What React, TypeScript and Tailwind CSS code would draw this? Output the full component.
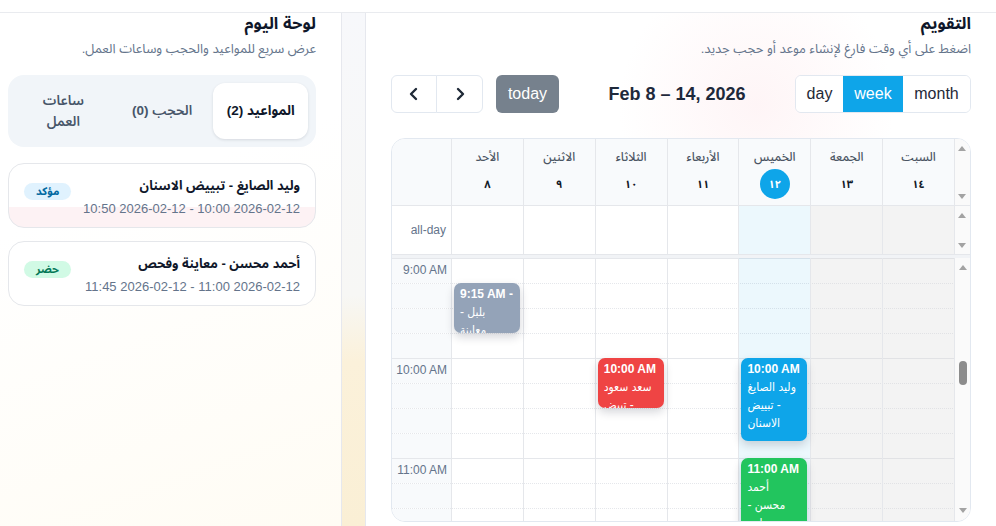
import React from "react";

type Day = { name: string; num: string; today?: boolean; off?: boolean };

const days: Day[] = [
  { name: "الأحد", num: "٨" },
  { name: "الاثنين", num: "٩" },
  { name: "الثلاثاء", num: "١٠" },
  { name: "الأربعاء", num: "١١" },
  { name: "الخميس", num: "١٢", today: true },
  { name: "الجمعة", num: "١٣", off: true },
  { name: "السبت", num: "١٤", off: true },
];

type Ev = {
  day: number;
  start: number;
  dur: number;
  color: string;
  time: string;
  title: string;
  short?: boolean;
};

const events: Ev[] = [
  { day: 0, start: 15, dur: 30, color: "bg-[#94a3b8]", time: "9:15 AM", title: "بلبل - معاينة", short: true },
  { day: 2, start: 60, dur: 30, color: "bg-[#ef4444]", time: "10:00 AM", title: "سعد سعود - تبيض الاسنان" },
  { day: 4, start: 60, dur: 50, color: "bg-[#0ea5e9]", time: "10:00 AM", title: "وليد الصايغ - تبييض الاسنان" },
  { day: 4, start: 120, dur: 45, color: "bg-[#22c55e]", time: "11:00 AM", title: "أحمد محسن - معاينة وفحص" },
];

function Up() {
  return (
    <svg width="8" height="5" viewBox="0 0 8 5">
      <path d="M0 5 L4 0 L8 5 Z" fill="#a3a3a3" />
    </svg>
  );
}
function Down() {
  return (
    <svg width="8" height="5" viewBox="0 0 8 5">
      <path d="M0 0 L8 0 L4 5 Z" fill="#a3a3a3" />
    </svg>
  );
}

function Chevron({ dir }: { dir: "l" | "r" }) {
  return (
    <svg width="12" height="14" viewBox="0 0 12 14" fill="none">
      <path
        d={dir === "l" ? "M8 2 L3 7 L8 12" : "M4 2 L9 7 L4 12"}
        stroke="#1f2937"
        strokeWidth="2.4"
        strokeLinecap="round"
        strokeLinejoin="round"
      />
    </svg>
  );
}

function Calendar() {
  const rows = Array.from({ length: 12 }, (_, i) => i);
  const labels: Record<number, string> = { 0: "9:00 AM", 4: "10:00 AM", 8: "11:00 AM" };
  return (
    <div dir="ltr" className="mt-[25px] h-[384px] w-full overflow-hidden rounded-[14px] border border-[#e2e8f0] bg-white flex flex-col">
      {/* header */}
      <div className="grid h-[67px] shrink-0 grid-cols-[60px_repeat(7,minmax(0,1fr))_15px] border-b border-[#e5e7eb] bg-[#f8fafc]">
        <div className="border-r border-[#e5e7eb]" />
        {days.map((d) => (
          <div key={d.name} className="flex flex-col items-center border-r border-[#e5e7eb] pt-[10px]">
            <div className="text-[12px] font-medium leading-4 text-[#4b5563]">{d.name}</div>
            <div
              className={
                d.today
                  ? "mt-1 flex h-[30px] w-[30px] items-center justify-center rounded-full bg-[#0ea5e9] text-[11px] font-bold text-white"
                  : "mt-1 flex h-[30px] w-[30px] items-center justify-center text-[11px] font-bold text-[#111827]"
              }
            >
              {d.num}
            </div>
          </div>
        ))}
        <div className="flex flex-col items-center justify-between bg-[#fafafa] pt-[7px] pb-[6px]">
          <Up />
          <Down />
        </div>
      </div>
      {/* all-day */}
      <div className="grid h-[49px] shrink-0 grid-cols-[60px_repeat(7,minmax(0,1fr))_15px] border-b border-[#e5e7eb]">
        <div className="flex items-center justify-end border-r border-[#e5e7eb] pr-[5px] text-[12px] text-[#64748b]">
          all-day
        </div>
        {days.map((d) => (
          <div
            key={d.name}
            className={
              d.today
                ? "border-r border-[#e5e7eb] bg-[rgba(14,165,233,0.08)]"
                : d.off
                ? "border-r border-[#e5e7eb] bg-[rgba(215,215,215,0.3)]"
                : "border-r border-[#e5e7eb]"
            }
          />
        ))}
        <div className="flex flex-col items-center justify-between bg-[#fafafa] pt-[7px] pb-[6px]">
          <Up />
          <Down />
        </div>
      </div>
      {/* divider */}
      <div className="h-[3px] shrink-0 bg-[#f1f3f6]" />
      {/* body */}
      <div className="flex min-h-0 flex-1">
        <div className="relative min-w-0 flex-1 overflow-hidden">
          {rows.map((i) => (
            <div
              key={i}
              className={
                i % 4 === 0
                  ? "flex h-[25px] border-t border-[#e5e7eb]"
                  : "flex h-[25px] border-t border-dotted border-[#e5e7eb]"
              }
            >
              <div className="w-[60px] bg-[#f8fafc] pr-[5px] pt-[3px] text-right text-[12px] leading-4 text-[#64748b]">
                {labels[i] ?? ""}
              </div>
            </div>
          ))}
          <div className="absolute inset-0 grid grid-cols-[60px_repeat(7,minmax(0,1fr))]">
            <div className="border-r border-[#e5e7eb]" />
            {days.map((d, di) => (
              <div
                key={d.name}
                className={
                  d.today
                    ? "relative border-r border-[#e5e7eb] bg-[rgba(14,165,233,0.08)]"
                    : d.off
                    ? "relative border-r border-[#e5e7eb] bg-[rgba(215,215,215,0.3)]"
                    : "relative border-r border-[#e5e7eb]"
                }
              >
                {events
                  .filter((e) => e.day === di)
                  .map((e) => (
                    <div
                      key={e.time + e.title}
                      className={`absolute left-[2px] right-[3px] overflow-hidden rounded-[7px] px-[6px] pt-[2px] font-['Liberation_Sans','DejaVu_Sans_Condensed','DejaVu_Sans',sans-serif] text-[12px] leading-[18px] text-white shadow-[0_4px_10px_rgba(15,23,42,0.18)] ${e.color}`}
                      style={{ top: (e.start * 100) / 60, height: (e.dur * 100) / 60 }}
                    >
                      {e.short ? (
                        <div>
                          <span className="font-semibold">{e.time} - </span>
                          <span>{e.title}</span>
                        </div>
                      ) : (
                        <>
                          <div className="font-semibold">{e.time}</div>
                          <div>{e.title}</div>
                        </>
                      )}
                    </div>
                  ))}
              </div>
            ))}
          </div>
        </div>
        <div className="flex w-[15px] shrink-0 flex-col items-center bg-[#fafafa] pt-[7px] pb-[8px]">
          <Up />
          <div className="mt-[91px] h-[24px] w-[8px] rounded-[4px] bg-[#8c8c8c]" />
          <div className="mt-auto">
            <Down />
          </div>
        </div>
      </div>
    </div>
  );
}

export default function App() {
  return (
    <div
      dir="rtl"
      className="flex h-[526px] w-[996px] flex-col overflow-hidden bg-white font-['Liberation_Sans','Noto_Sans_Arabic','DejaVu_Sans',sans-serif]"
    >
      <div className="h-[13px] shrink-0 border-b border-[#e9ebef] bg-white" />
      <div className="flex min-h-0 flex-1">
        {/* calendar panel */}
        <section className="w-[630px] shrink-0 bg-white bg-[radial-gradient(circle_at_62%_18%,rgba(253,226,230,0.35),rgba(255,255,255,0)_24%)] px-[25px]">
          <h2 className="text-[16.5px] font-bold leading-5 text-[#0f172a]">التقويم</h2>
          <p className="mt-[6px] text-[13px] leading-5 text-[#64748b]">
            اضغط على أي وقت فارغ لإنشاء موعد أو حجب جديد.
          </p>
          <div dir="ltr" className="mt-4 flex h-[38px] items-center justify-between">
            <div className="flex items-center">
              <div className="flex">
                <button className="flex h-[38px] w-[46px] items-center justify-center rounded-l-[6px] border border-[#e2e8f0] bg-white">
                  <Chevron dir="l" />
                </button>
                <button className="-ml-px flex h-[38px] w-[47px] items-center justify-center rounded-r-[6px] border border-[#e2e8f0] bg-white">
                  <Chevron dir="r" />
                </button>
              </div>
              <button className="ml-[13px] h-[38px] w-[63px] rounded-[6px] bg-[#76818d] text-[16px] text-white">today</button>
            </div>
            <div className="text-[18px] font-bold text-[#1e293b]">Feb 8 – 14, 2026</div>
            <div className="flex overflow-hidden rounded-[6px] border border-[#e2e8f0]">
              <button className="h-[36px] w-[47px] bg-white text-[16px] text-[#1f2937]">day</button>
              <button className="h-[36px] w-[60px] bg-[#0ea5e9] text-[16px] text-white">week</button>
              <button className="h-[36px] w-[67px] bg-white text-[16px] text-[#1f2937]">month</button>
            </div>
          </div>
          <Calendar />
        </section>

        {/* gap strip */}
        <div className="w-[25px] shrink-0 border-x border-[#e6e8ee] bg-[linear-gradient(to_bottom,#f7f8fb_0%,#f7f7f5_55%,#fbf1da_68%,#faefd5_100%)]" />

        {/* dashboard panel */}
        <section className="w-[341px] shrink-0 bg-[linear-gradient(160deg,#ffffff_35%,#fffcf4_100%)] pr-[25px] pl-[8px]">
          <h2 className="text-[16.5px] font-bold leading-5 text-[#0f172a]">لوحة اليوم</h2>
          <p className="mt-[6px] text-[13px] leading-5 text-[#64748b]">عرض سريع للمواعيد والحجب وساعات العمل.</p>
          <div className="mt-4 grid grid-cols-3 gap-1 rounded-[16px] bg-[#f1f5f9] p-2">
            <div className="flex h-[56px] items-center justify-center whitespace-nowrap rounded-[12px] bg-white px-2 text-center text-[13.5px] font-bold leading-5 text-[#0f172a] shadow-[0_1px_3px_rgba(15,23,42,0.12)]">
              المواعيد (2)
            </div>
            <div className="flex h-[56px] items-center justify-center whitespace-nowrap px-2 text-center text-[13.5px] font-semibold leading-5 text-[#475569]">
              الحجب (0)
            </div>
            <div className="flex h-[56px] items-center justify-center px-6 text-center text-[13.5px] font-semibold leading-[21px] text-[#475569]">
              ساعات العمل
            </div>
          </div>
          <div className="mt-4 flex flex-col gap-[13px]">
            <div className="flex items-start justify-between rounded-[16px] border border-[#e5e7eb] bg-[linear-gradient(to_bottom,#ffffff_68%,#fdf2f4_68%)] px-[15px] pt-[11px] pb-[8px]">
              <div>
                <div className="text-[13px] font-bold leading-[22px] text-[#0f172a]">وليد الصايغ - تبييض الاسنان</div>
                <div className="mt-[2px] text-[13px] leading-5 text-[#64748b]">2026-02-12 10:00 - 2026-02-12 10:50</div>
              </div>
              <span className="mt-[8px] h-[17px] rounded-full bg-[#e0f2fe] px-[12px] text-[11px] font-bold leading-[17px] text-[#0369a1]">
                مؤكد
              </span>
            </div>
            <div className="flex items-start justify-between rounded-[16px] border border-[#e5e7eb] bg-white px-[15px] pt-[11px] pb-[8px]">
              <div>
                <div className="text-[13px] font-bold leading-[22px] text-[#0f172a]">أحمد محسن - معاينة وفحص</div>
                <div className="mt-[2px] text-[13px] leading-5 text-[#64748b]">2026-02-12 11:00 - 2026-02-12 11:45</div>
              </div>
              <span className="mt-[8px] h-[17px] rounded-full bg-[#d1fae5] px-[12px] text-[11px] font-bold leading-[17px] text-[#047857]">
                حضر
              </span>
            </div>
          </div>
        </section>
      </div>
    </div>
  );
}
